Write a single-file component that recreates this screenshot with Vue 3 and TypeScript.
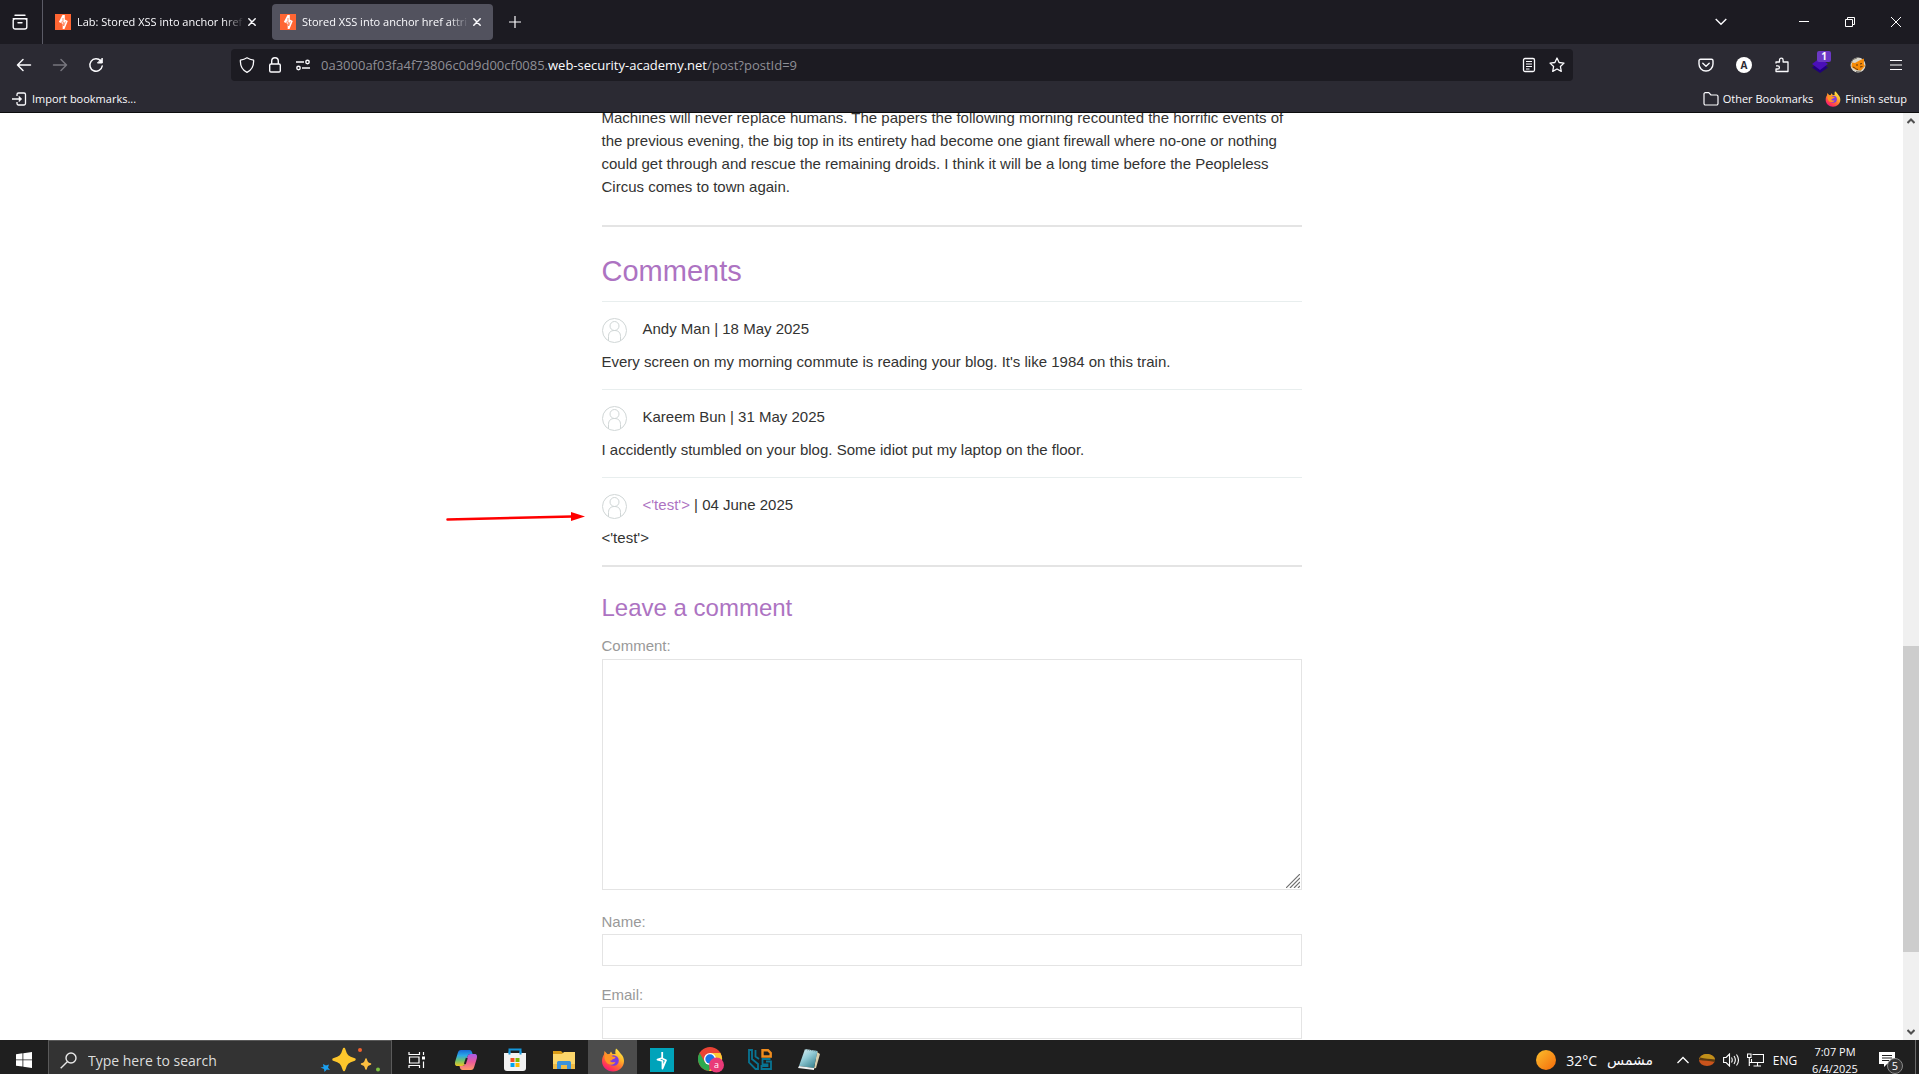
<script setup lang="ts">
import { ref } from 'vue'

interface Tab {
  id: number
  title: string
  active: boolean
}

interface Comment {
  id: number
  author: string
  date: string
  text: string
  link?: boolean
}

const tabs = ref<Tab[]>([
  { id: 1, title: 'Lab: Stored XSS into anchor href', active: false },
  { id: 2, title: 'Stored XSS into anchor href attri', active: true },
])

const comments = ref<Comment[]>([
  {
    id: 1,
    author: 'Andy Man',
    date: '18 May 2025',
    text: "Every screen on my morning commute is reading your blog. It's like 1984 on this train.",
  },
  {
    id: 2,
    author: 'Kareem Bun',
    date: '31 May 2025',
    text: 'I accidently stumbled on your blog. Some idiot put my laptop on the floor.',
  },
  { id: 3, author: "<'test'>", date: '04 June 2025', text: "<'test'>", link: true },
])

const comment = ref('')
const name = ref('')
const email = ref('')
const search = ref('')
</script>

<template>
  <div class="desktop">
    <header class="browser">
      <div class="tab-bar">
        <button class="icon-btn recent" aria-label="Recent browsing">
          <svg width="16" height="16" viewBox="0 0 16 16" fill="none" stroke="#fbfbfe" stroke-width="1.4">
            <path d="M3 1.2h10M1.2 4.7h13.6v8.3a2 2 0 0 1-2 2H3.200a2 2 0 0 1-2-2V6.200a2 2 0 0 1 2-1.500M14.800 6.200a2 2 0 0 0-2-1.500M6 8.700h4" stroke-linecap="round" />
          </svg>
        </button>
        <div class="tabs">
          <div v-for="tab in tabs" :key="tab.id" class="tab" :class="{ active: tab.active }">
            <svg class="favicon" width="16" height="16" viewBox="0 0 16 16">
              <rect width="16" height="16" fill="#ff6633" />
              <path d="M7.500 1h2.300v4.500l3 1.500-3.300 8H7.700v-5.200L3.800 8z" fill="#fff" />
              <path d="M8 4v3.800L6 8.300M8.600 8v4l1.900-4.500" stroke="#ff6633" stroke-width=".700" fill="none" />
            </svg>
            <span class="tab-title">{{ tab.title }}</span>
            <button class="tab-close" aria-label="Close tab">
              <svg width="8" height="8" viewBox="0 0 8 8" stroke="#fbfbfe" stroke-width="1.500" stroke-linecap="round">
                <path d="M.800.800 7.200 7.200M7.200.800.800 7.200" />
              </svg>
            </button>
          </div>
        </div>
        <button class="icon-btn new-tab" aria-label="New tab">
          <svg width="12" height="12" viewBox="0 0 12 12" stroke="#fbfbfe" stroke-width="1.200"><path d="M6 0v12M0 6h12" /></svg>
        </button>
        <div class="window-controls">
          <button class="icon-btn list-tabs" aria-label="List all tabs">
            <svg width="12" height="8" viewBox="0 0 12 8" fill="none" stroke="#fbfbfe" stroke-width="1.400"><path d="m.700 1 5.300 5.300L11.300 1" /></svg>
          </button>
          <button class="icon-btn win" aria-label="Minimize">
            <svg width="10" height="10" viewBox="0 0 10 10" stroke="#fff"><path d="M0 4.500h10" /></svg>
          </button>
          <button class="icon-btn win" aria-label="Restore">
            <svg width="10" height="10" viewBox="0 0 10 10" fill="none" stroke="#fff"><path d="M.500 2.500h7v7h-7zM2.500 2.500v-2h7v7h-2" /></svg>
          </button>
          <button class="icon-btn win" aria-label="Close">
            <svg width="10" height="10" viewBox="0 0 10 10" stroke="#fff"><path d="m0 0 10 10M10 0 0 10" /></svg>
          </button>
        </div>
      </div>

      <div class="nav-bar">
        <div class="nav-left">
          <button class="icon-btn nav" aria-label="Back">
            <svg width="16" height="16" viewBox="0 0 16 16" fill="none" stroke="#fbfbfe" stroke-width="1.500" stroke-linecap="round" stroke-linejoin="round"><path d="M14.500 8h-13M7 2.500 1.500 8 7 13.500" /></svg>
          </button>
          <button class="icon-btn nav" aria-label="Forward" disabled>
            <svg width="16" height="16" viewBox="0 0 16 16" fill="none" stroke="#77767e" stroke-width="1.500" stroke-linecap="round" stroke-linejoin="round"><path d="M1.500 8h13M9 2.500 14.500 8 9 13.500" /></svg>
          </button>
          <button class="icon-btn nav" aria-label="Reload">
            <svg width="16" height="16" viewBox="0 0 16 16" fill="none" stroke="#fbfbfe" stroke-width="1.500" stroke-linecap="round"><path d="M12.800 4A6.200 6.200 0 1 0 14.200 9" /><path d="M14.300 1.500V6H9.800z" fill="#fbfbfe" stroke-width="1" stroke-linejoin="round" /></svg>
          </button>
        </div>
        <div class="url-bar">
          <button class="icon-btn url-icon" aria-label="Tracking protection">
            <svg width="16" height="16" viewBox="0 0 16 16" fill="none" stroke="#fbfbfe" stroke-width="1.300" stroke-linejoin="round"><path d="M8 .800c2 1.300 4.200 2 6.600 2.400C14.900 8.800 12.800 13 8 15.300 3.200 13 1.100 8.800 1.400 3.200 3.800 2.800 6 2.100 8 .800z" /></svg>
          </button>
          <button class="icon-btn url-icon" aria-label="Site information">
            <svg width="16" height="16" viewBox="0 0 16 16" fill="none" stroke="#fbfbfe" stroke-width="1.400"><rect x="2.700" y="7" width="10.600" height="8" rx="1.300" /><path d="M4.700 7V4a3.300 3.300 0 0 1 6.600 0v3" /></svg>
          </button>
          <button class="icon-btn url-icon" aria-label="Permissions">
            <svg width="16" height="16" viewBox="0 0 16 16" fill="none" stroke="#fbfbfe" stroke-width="1.400"><path d="M1 5h8M7 11h8" /><circle cx="12.500" cy="5" r="1.700" /><circle cx="3.500" cy="11" r="1.700" /></svg>
          </button>
          <a class="url" href="#post">0a3000af03fa4f73806c0d9d00cf0085.<b>web-security-academy.net</b>/post?postId=9</a>
          <button class="icon-btn url-icon" aria-label="Reader view">
            <svg width="16" height="16" viewBox="0 0 16 16" fill="none" stroke="#fbfbfe" stroke-width="1.300"><rect x="2.500" y="1.500" width="11" height="13" rx="1.500" /><path d="M5 4.500h6M5 7h6M5 9.500h6M5 12h3.500" stroke-width="1" /></svg>
          </button>
          <button class="icon-btn url-icon" aria-label="Bookmark this page">
            <svg width="16" height="16" viewBox="0 0 16 16" fill="none" stroke="#fbfbfe" stroke-width="1.300" stroke-linejoin="round"><path d="m8 1 2.100 4.500 4.900.600-3.600 3.400.900 4.900L8 12l-4.300 2.400.900-4.900L1 6.100l4.900-.600z" /></svg>
          </button>
        </div>
        <div class="nav-right">
          <button class="icon-btn ext" aria-label="Save to Pocket">
            <svg width="16" height="16" viewBox="0 0 16 16" fill="none" stroke="#fbfbfe" stroke-width="1.400" stroke-linecap="round" stroke-linejoin="round"><path d="M2.500 2.200h11a1.500 1.500 0 0 1 1.500 1.500V7A7 7 0 0 1 1 7V3.700a1.500 1.500 0 0 1 1.500-1.500z" /><path d="M4.800 6.300 8 9.300l3.200-3" /></svg>
          </button>
          <button class="icon-btn ext" aria-label="Account">
            <span class="account">A</span>
          </button>
          <button class="icon-btn ext" aria-label="Extensions">
            <svg width="16" height="16" viewBox="0 0 16 16" fill="none" stroke="#fbfbfe" stroke-width="1.300" stroke-linejoin="round"><path d="M2 6.500V5h3.500V3a1.800 1.800 0 1 1 3.600 0v2H14v9.500H2V12h1.800a1.600 1.600 0 0 0 0-3.200H2" /></svg>
          </button>
          <button class="icon-btn ext stack" aria-label="Container extension">
            <svg width="18" height="18" viewBox="0 0 18 18"><path d="m9 6 8 5.500L9 17l-8-5.500z" fill="#20007a" /><path d="m9 2 8 6-8 6-8-6z" fill="#4a0fb8" /></svg>
            <span class="badge">1</span>
          </button>
          <button class="icon-btn ext" aria-label="FoxyProxy">
            <svg width="16" height="16" viewBox="0 0 16 16"><circle cx="8" cy="8" r="7.500" fill="#d8d5cb" /><path d="M2 5.500 5 6 9.500 3.500 14 1.500 13.800 7 15 9l-4 4.500-5-.500-4.500-3z" fill="#f58a07" /><path d="M3 10c2 .500 3 2.500 5 2.500M6 8h2M10 7l2-.500M10 10l2.500-.500" stroke="#5d3510" fill="none" /><path d="M1 6 3 2.500l4-1.500M6 14.500l5-.500" stroke="#77736b" fill="none" /></svg>
          </button>
          <button class="icon-btn ext" aria-label="Application menu">
            <svg width="12" height="12" viewBox="0 0 12 12" stroke="#fbfbfe" stroke-width="1.200" stroke-linecap="round"><path d="M.500 1.500h11M.500 6h11M.500 10.500h11" /></svg>
          </button>
        </div>
      </div>

      <div class="bookmarks-bar">
        <button class="bookmark">
          <svg width="16" height="16" viewBox="0 0 16 16" fill="none" stroke="#fbfbfe" stroke-width="1.300"><path d="M5 5V3.500A1.500 1.500 0 0 1 6.500 2H12a1.500 1.500 0 0 1 1.500 1.500v9A1.500 1.500 0 0 1 12 14H6.500A1.500 1.500 0 0 1 5 12.500V11M0 8h8" /><path d="M7 5.200 9.800 8 7 10.800z" fill="#fbfbfe" stroke-width=".500" /></svg>
          Import bookmarks...
        </button>
        <div class="bookmarks-right">
          <button class="bookmark">
            <svg width="16" height="16" viewBox="0 0 16 16" fill="none" stroke="#fbfbfe" stroke-width="1.200" stroke-linejoin="round"><path d="M1 4V3a1.300 1.300 0 0 1 1.300-1.300h3.500L8 4h5.500A1.500 1.500 0 0 1 15 5.500v7a1.500 1.500 0 0 1-1.500 1.500h-11A1.500 1.500 0 0 1 1 12.500z" /></svg>
            Other Bookmarks
          </button>
          <button class="bookmark">
            <svg width="16" height="16" viewBox="0 0 24 24"><use href="#firefox-mark" /></svg>
            Finish setup
          </button>
        </div>
      </div>
    </header>

    <div class="viewport">
      <main class="page">
        <div id="post" class="column">
          <p class="article">
            Machines will never replace humans. The papers the following morning recounted the horrific events of
            the previous evening, the big top in its entirety had become one giant firewall where no-one or nothing
            could get through and rescue the remaining droids. I think it will be a long time before the Peopleless
            Circus comes to town again.
          </p>
          <hr class="rule" />
          <h1>Comments</h1>
          <section v-for="item in comments" :key="item.id" class="comment">
            <div class="comment-head">
              <svg class="avatar" width="25" height="25" viewBox="0 0 25 25" fill="none" stroke="#d0d6d6">
                <circle cx="12.500" cy="12.500" r="12" />
                <circle cx="12.500" cy="8" r="4.500" />
                <path d="M6.500 23v-4.500c0-3.800 2-6 6-6s6 2.200 6 6V23" />
              </svg>
              <span><a v-if="item.link" href="#author">{{ item.author }}</a><template v-else>{{ item.author }}</template> | {{ item.date }}</span>
            </div>
            <p>{{ item.text }}</p>
            <svg v-if="item.link" class="pointer" width="140" height="12" viewBox="0 0 140 12">
              <path d="M1.500 8.500 126 5.500" stroke="#ff0000" stroke-width="2.500" stroke-linecap="round" />
              <path d="M125 1v9l14-4.500z" fill="#ff0000" />
            </svg>
          </section>
          <hr class="rule" />
          <form @submit.prevent>
            <h2>Leave a comment</h2>
            <label for="comment">Comment:</label>
            <div class="textarea-wrap">
              <textarea id="comment" v-model="comment"></textarea>
              <svg class="grip" width="14" height="14" viewBox="0 0 14 14" stroke="#707070" stroke-width="1.200"><path d="M0 14 14 0M4 14 14 4M8 14l6-6M12 14l2-2" /></svg>
            </div>
            <label for="name">Name:</label>
            <input id="name" v-model="name" type="text" />
            <label for="email">Email:</label>
            <input id="email" v-model="email" type="email" />
          </form>
        </div>
      </main>
      <div class="scrollbar">
        <button aria-label="Scroll up"><svg width="8" height="6" viewBox="0 0 8 6" fill="none" stroke="#505050" stroke-width="2"><path d="M.500 5 4 1.500 7.500 5" /></svg></button>
        <div class="track"><div class="before"></div><div class="thumb"></div><div class="after"></div></div>
        <button aria-label="Scroll down"><svg width="8" height="6" viewBox="0 0 8 6" fill="none" stroke="#505050" stroke-width="2"><path d="M.500 1 4 4.500 7.500 1" /></svg></button>
      </div>
    </div>

    <footer class="taskbar">
      <div class="taskbar-inner">
        <button class="icon-btn start" aria-label="Start">
          <svg width="16" height="16" viewBox="0 0 16 16" fill="#fff"><path d="M0 2.200 6.500 1.300v6.200H0zM7.300 1.200 16 0v7.500H7.300zM0 8.300h6.500v6.300L0 13.700zM7.300 8.300H16V16l-8.700-1.200z" /></svg>
        </button>
        <label class="search">
          <svg width="17" height="17" viewBox="0 0 17 17" fill="none" stroke="#e8e8e8" stroke-width="1.400"><circle cx="11" cy="6" r="5" /><path d="M7.300 9.700.700 16.300" /></svg>
          <input v-model="search" type="text" placeholder="Type here to search" aria-label="Type here to search" />
          <svg width="62" height="26" viewBox="0 0 62 26">
            <path d="M24 2c2 7 3.500 8.500 10.500 10.500C27.500 14.500 26 16 24 23c-2-7-3.500-8.500-10.500-10.500C20.500 10.500 22 9 24 2z" fill="#fdc62c" stroke="#fdc62c" stroke-width="2.500" stroke-linejoin="round" />
            <path d="M46 12c1 3.500 1.500 4 4.500 5C47.500 18 47 18.500 46 22c-1-3.500-1.500-4-4.500-5C44.500 16 45 15.500 46 12z" fill="#fdc040" stroke="#fdc040" stroke-width="1.500" stroke-linejoin="round" />
            <path d="m3 17 3 1.500 3-1-1 3 2 2.500-3.200-.500L4.500 25 4 22l-3.500-1.500L3.500 20z" fill="#1ba0f0" />
            <circle cx="40" cy="3" r="2" fill="#f2622e" /><circle cx="58" cy="22.500" r="2" fill="#7dc242" />
          </svg>
        </label>
        <nav class="apps">
          <button class="icon-btn app" aria-label="Task view">
            <svg width="18" height="16" viewBox="0 0 18 16" fill="none" stroke="#fff" stroke-width="1.200"><path d="M1 0v2.500h10.500V0M1 16v-2.500h10.500V16M1.500 5h9.500v6H1.500zM15.500 0v3M15.500 9.500V16" /><path d="M14 4.500h3v3h-3z" fill="#fff" stroke="none" /></svg>
          </button>
          <button class="icon-btn app" aria-label="Copilot">
            <svg width="24" height="24" viewBox="0 0 24 24">
              <defs>
                <linearGradient id="cp-a" x1="0" y1="0" x2="0" y2="1"><stop offset="0" stop-color="#1868d8" /><stop offset=".350" stop-color="#2ba9e8" /><stop offset=".650" stop-color="#6cc071" /><stop offset="1" stop-color="#f0c820" /></linearGradient>
                <linearGradient id="cp-b" x1="0" y1="0" x2="0" y2="1"><stop offset="0" stop-color="#a45bea" /><stop offset=".500" stop-color="#ea5a9a" /><stop offset="1" stop-color="#ff9a68" /></linearGradient>
              </defs>
              <path d="M7 2h8.500c1.500 0 2.200 1 2.600 2.500L18.600 6h-2c-2 0-2.600 1-3.100 2.500l-2.300 7c-.600 1.700-1.200 2.500-3 2.500H3.500C1 18 .600 16 1.200 13.500l2.600-8.600C4.400 3 5.200 2 7 2z" fill="url(#cp-a)" />
              <path d="M17 22H8.500c-1.500 0-2.200-1-2.600-2.500L5.500 18h2.700c1.800 0 2.400-.800 3-2.500l2.300-7C14 7 14.600 6 16.600 6h3.900c2.500 0 2.900 2 2.300 4.500l-2.600 8.600C19.600 21 18.800 22 17 22z" fill="url(#cp-b)" />
              <path d="m12.800 10-2 6" stroke="#1f1f1f" stroke-width="2" />
            </svg>
          </button>
          <button class="icon-btn app" aria-label="Microsoft Store">
            <svg width="24" height="24" viewBox="0 0 24 24"><path d="M6.500 6V1.500h11V6" fill="none" stroke="#1597dc" stroke-width="2" /><path d="M1 5h22v15a3 3 0 0 1-3 3H4a3 3 0 0 1-3-3z" fill="#f2f2f2" /><path d="M6.500 6.500v-3M17.500 6.500v-3" stroke="#1597dc" stroke-width="2" /><path d="M7.500 10h4v4h-4z" fill="#f25022" /><path d="M12.500 10h4v4h-4z" fill="#7fba00" /><path d="M7.500 15h4v4h-4z" fill="#00a4ef" /><path d="M12.500 15h4v4h-4z" fill="#ffb900" /></svg>
          </button>
          <button class="icon-btn app" aria-label="File Explorer">
            <svg width="24" height="24" viewBox="0 0 24 24"><path d="M1 3h8l2 2v3H1z" fill="#d99b16" /><path d="M1 6h9l2-2h11v17H1z" fill="#fbd66b" /><path d="M1 16h22v5H1z" fill="#efbb45" /><path d="M5 21v-6.500A1.500 1.500 0 0 1 6.500 13h11a1.500 1.500 0 0 1 1.500 1.500V21h-4v-4H9v4z" fill="#3b92dc" /></svg>
          </button>
          <button class="icon-btn app current" aria-label="Firefox">
            <svg width="24" height="24" viewBox="0 0 24 24">
              <defs>
                <linearGradient id="ff-body" x1=".850" y1="0" x2=".200" y2="1"><stop offset="0" stop-color="#fff44f" /><stop offset=".350" stop-color="#ffb429" /><stop offset=".600" stop-color="#ff6a33" /><stop offset=".850" stop-color="#ff2c5f" /><stop offset="1" stop-color="#e31587" /></linearGradient>
              </defs>
              <g id="firefox-mark">
                <path d="M15 .500c3 2 3.500 4 5 5.500 2 2 3 4.500 3 7C23 19 18 23.500 12 23.500S1 19 1 13c0-3 1-5 2-6.500L3.500 3l3 3.200 2-.200L10 3.500l1.500 2.500h3c-.500-2 0-4 .500-5.500z" fill="url(#ff-body)" />
                <circle cx="12.500" cy="12.500" r="5.300" fill="#7b3ce0" />
                <path d="M4 7c3-1.500 6-.500 7.500 1.500l3 .500c0 1.500-1.500 2-3 2.200-.500 1.300-1.500 1.300-2.500 1.500 1 1.800 3 2 5.500 1-1 3.500-6.500 4-9 .800C3.500 12 3 9.500 4 7z" fill="#ff9425" />
              </g>
            </svg>
          </button>
          <button class="icon-btn app" aria-label="Burp Suite">
            <svg width="24" height="24" viewBox="0 0 24 24"><path d="M0 0h24v24H0z" fill="#00a3ba" /><path d="M12.200 4v6l-4.700 1.700 5 1.300v7.500L16 12.200l-3.800-1.700" fill="none" stroke="#fff" stroke-width="1.800" stroke-linejoin="round" /></svg>
          </button>
          <button class="icon-btn app" aria-label="Google Chrome">
            <svg class="chrome" width="26" height="26" viewBox="0 0 26 26"><circle cx="12" cy="12" r="12" fill="#ea4335" /><path d="M1.600 6 7 15.500 12 18l-1 6A12 12 0 0 1 1.600 6z" fill="#2da94f" /><path d="M12 6h10.400A12 12 0 0 1 11 24l6-9z" fill="#fcc934" /><circle cx="12" cy="12" r="6" fill="#fff" /><circle cx="12" cy="12" r="4.700" fill="#1a73e8" /><circle cx="18.500" cy="18" r="7.500" fill="#e93a78" /><text x="18.500" y="21" text-anchor="middle" font-size="9" fill="#fff" font-family="Open Sans, sans-serif">a</text></svg>
          </button>
          <button class="icon-btn app" aria-label="Virtual machine manager">
            <svg width="24" height="24" viewBox="0 0 24 24" fill="none" stroke="#087493" stroke-width="1.800"><path d="M1 2h3v9l6 5v5H7.500L1 14.500zM7.500 2v6.500L11 11M22.500 11h-8v5.500h5v1.500h-6V21h9.500v-7.500h-5" /><path d="M14.500 2.200H20L22.700 5v3.500h-8.200z" stroke="#f08c1e" stroke-width="2.400" /></svg>
          </button>
          <button class="icon-btn app" aria-label="Notepad">
            <svg width="24" height="24" viewBox="0 0 24 24"><defs><linearGradient id="np" x1="0" y1="0" x2=".700" y2="1"><stop offset="0" stop-color="#e4f4f7" /><stop offset=".500" stop-color="#92cad5" /><stop offset="1" stop-color="#3e8794" /></linearGradient></defs><path d="m20 4 3 2-4 14-2 .500z" fill="#d8cfae" /><path d="m8 1 12.500 2L17 20 2 18z" fill="url(#np)" /><path d="m2 18 15 2v2L1 20z" fill="#eef1f1" /><path d="m8 1.500 12.500 2" stroke="#6f8d94" stroke-dasharray="1 1" /></svg>
          </button>
        </nav>
        <div class="tray">
          <button class="weather">
            <svg width="20" height="20" viewBox="0 0 20 20"><defs><linearGradient id="sun" x1="0" y1="0" x2="1" y2="1"><stop offset="0" stop-color="#fbbf2d" /><stop offset="1" stop-color="#f56a0a" /></linearGradient></defs><circle cx="10" cy="10" r="10" fill="url(#sun)" /></svg>
            <span>32°C</span><span class="arabic" lang="ar">مشمس</span>
          </button>
          <button class="icon-btn tray-icon" aria-label="Show hidden icons">
            <svg width="12" height="8" viewBox="0 0 12 8" fill="none" stroke="#fff" stroke-width="1.300"><path d="M.500 7 6 1.500 11.500 7" /></svg>
          </button>
          <button class="icon-btn tray-icon" aria-label="Background app">
            <svg width="16" height="12" viewBox="0 0 16 12"><ellipse cx="8" cy="6" rx="8" ry="6" fill="#c9541c" /><path d="M0 5C1 2 4 0 8 0s8 2.500 8 6c-6 0-11 0-16-1z" fill="#c0901a" /><path d="M1 3.500c5 1.500 9 1 15 2V8C10 7 5 6.500 0 6z" fill="#5b3a10" /></svg>
          </button>
          <button class="icon-btn tray-icon" aria-label="Volume">
            <svg width="17" height="14" viewBox="0 0 17 14" fill="none" stroke="#fff" stroke-width="1.100"><path d="M.600 4.500h2.500L6.500 1v12L3.100 9.500H.600zM8.500 4.500q1.500 2.500 0 5M11 3q2.700 4 0 8M13.500 1.500q4 5.500 0 11" /></svg>
          </button>
          <button class="icon-btn tray-icon" aria-label="Network">
            <svg width="17" height="14" viewBox="0 0 17 14" fill="none" stroke="#fff" stroke-width="1.100"><path d="M5.500 1.500h11v8h-12V6M10.500 9.500v3M6.500 13h7.500M.500 1v3.500H4V1zM2.300 4.500V13M4.500 9.500H2.300" /></svg>
          </button>
          <button class="lang">ENG</button>
          <button class="clock"><span>7:07 PM</span><span>6/4/2025</span></button>
          <button class="icon-btn notify" aria-label="Notifications">
            <svg width="16" height="16" viewBox="0 0 16 16"><path d="M0 0h16v12H8l-3 3v-3H0z" fill="#fff" /><path d="M3 3.500h10M3 6h10M3 8.500h7" stroke="#1f1f1f" /></svg>
            <span class="count">5</span>
          </button>
          <div class="peek"></div>
        </div>
      </div>
    </footer>
  </div>
</template>

<style>
body {
  margin: 0;
  background: #fff;
}
</style>

<style scoped>
.desktop {
  height: 100vh;
  display: flex;
  flex-direction: column;
  overflow: hidden;
  font-family: 'Open Sans', 'Noto Sans', sans-serif;
  font-size: 11px;
  color: #fbfbfe;
}
button {
  border: 0;
  padding: 0;
  margin: 0;
  background: none;
  color: inherit;
  font: inherit;
}
svg {
  display: block;
  flex: none;
}
.icon-btn {
  display: flex;
  align-items: center;
  justify-content: center;
  flex: none;
}

/* Browser chrome */
.browser {
  flex: none;
  background: #2b2a33;
  border-bottom: 1px solid #0c0c0d;
}
.tab-bar {
  display: flex;
  align-items: center;
  height: 44px;
  background: #1c1b22;
}
.recent {
  width: 43px;
  height: 44px;
  padding-right: 2px;
  box-sizing: border-box;
  border-right: 1px solid #5b5b66;
}
.tabs {
  display: flex;
  gap: 4px;
  padding-left: 4px;
}
.tab {
  display: flex;
  align-items: center;
  gap: 6px;
  width: 221px;
  height: 36px;
  padding: 0 8px;
  box-sizing: border-box;
  border-radius: 4px;
}
.tab.active {
  background: #52525e;
}
.tab-title {
  flex: 1;
  overflow: hidden;
  white-space: nowrap;
  line-height: 20px;
  mask-image: linear-gradient(to left, transparent, #000 20px);
}
.tab-close {
  width: 16px;
  display: flex;
  justify-content: center;
  margin-left: -6px;
}
.new-tab {
  width: 44px;
  height: 36px;
}
.window-controls {
  display: flex;
  align-items: center;
  margin-left: auto;
}
.list-tabs {
  width: 36px;
  height: 44px;
  margin-right: 42px;
}
.win {
  width: 46px;
  height: 44px;
}
.nav-bar {
  display: flex;
  align-items: center;
  height: 41px;
}
.nav-left {
  display: flex;
  width: 225px;
  padding-left: 6px;
}
.nav {
  width: 36px;
  height: 32px;
}
.url-bar {
  flex: 1;
  display: flex;
  align-items: center;
  height: 32px;
  padding: 0 2px;
  border-radius: 4px;
  background: #1c1b22;
}
.url-icon {
  width: 28px;
  height: 32px;
}
.url {
  flex: 1;
  padding-left: 4px;
  color: #8f8f96;
  text-decoration: none;
  font-size: 13px;
}
.url b {
  font-weight: 400;
  color: #fbfbfe;
}
.nav-right {
  display: flex;
  justify-content: flex-end;
  width: 342px;
  padding-right: 4px;
}
.ext {
  width: 38px;
  height: 32px;
  position: relative;
}
.account {
  width: 16px;
  height: 16px;
  border-radius: 8px;
  background: #fff;
  color: #2b2a33;
  font-size: 10px;
  font-weight: 700;
  line-height: 16px;
  text-align: center;
}
.badge {
  position: absolute;
  top: 2px;
  right: 8px;
  width: 14px;
  height: 11px;
  border-radius: 2px;
  background: #6b38c4;
  font-size: 10px;
  font-weight: 700;
  line-height: 11px;
}
.bookmarks-bar {
  display: flex;
  justify-content: space-between;
  align-items: center;
  height: 27px;
  padding: 0 12px;
}
.bookmarks-right {
  display: flex;
  gap: 12px;
}
.bookmark {
  display: flex;
  align-items: center;
  gap: 4px;
  line-height: 20px;
}

/* Web page */
.viewport {
  flex: 1;
  min-height: 0;
  display: flex;
  background: #fff;
}
.page {
  flex: 1;
  overflow: hidden;
  font-family: 'Liberation Sans', Arial, sans-serif;
  font-size: 15px;
  line-height: 23px;
  color: #333332;
}
.column {
  max-width: 700px;
  margin: -7px auto 0;
}
.page p {
  margin: 0;
}
.page a {
  color: #ad73c2;
  text-decoration: none;
}
.rule {
  height: 2px;
  margin: 0;
  border: 0;
  background: #e4e4e4;
}
.article + .rule {
  margin-top: 27px;
}
h1,
h2 {
  margin: 0;
  font-weight: 400;
  color: #ad73c2;
}
h1 {
  padding: 28px 0 13px;
  font-size: 29px;
  line-height: 33px;
}
.comment {
  position: relative;
  border-top: 1px solid #e8eeee;
  padding: 14px 0 16px;
}
.comment-head {
  display: flex;
  gap: 16px;
  margin-bottom: 6px;
}
.comment-head span {
  height: 28px;
  line-height: 26px;
}
.comment .avatar {
  margin-top: 2px;
}
.pointer {
  position: absolute;
  left: -156px;
  top: 33px;
}
form {
  padding-top: 26px;
}
h2 {
  font-size: 24px;
  line-height: 30px;
}
label {
  display: block;
  color: #999;
}
h2 + label {
  padding-top: 11px;
}
textarea,
form input {
  display: block;
  width: 100%;
  box-sizing: border-box;
  border: 1px solid #e4e4e4;
  border-radius: 0;
  background: #fff;
  font: inherit;
  color: inherit;
  outline: 0;
}
.textarea-wrap {
  position: relative;
  padding: 2px 0 20px;
}
textarea {
  height: 231px;
  resize: none;
}
.grip {
  position: absolute;
  right: 2px;
  bottom: 22px;
}
form input {
  height: 32px;
  margin: 1px 0 17px;
}
.scrollbar {
  width: 16px;
  display: flex;
  flex-direction: column;
  background: #f0f0f0;
}
.scrollbar button {
  height: 16px;
  display: flex;
  align-items: center;
  justify-content: center;
}
.track {
  flex: 1;
  display: flex;
  flex-direction: column;
}
.before {
  flex: 517;
}
.thumb {
  flex: 306;
  background: #cdcdcd;
}
.after {
  flex: 72;
}

/* Taskbar */
.taskbar {
  flex: none;
  height: 34px;
  overflow: hidden;
  background: #1f1f1f;
}
.taskbar-inner {
  display: flex;
  height: 40px;
}
.start {
  width: 48px;
}
.search {
  width: 344px;
  box-sizing: border-box;
  display: flex;
  align-items: center;
  gap: 11px;
  padding: 0 9px 0 11px;
  border: 1px solid #5a5a5a;
  background: #333;
}
.search input {
  flex: 1;
  min-width: 0;
  border: 0;
  padding: 0;
  outline: 0;
  background: none;
  color: #ddd;
  font: inherit;
  font-size: 14px;
}
.search input::placeholder {
  color: #ddd;
  opacity: 1;
}
.apps {
  display: flex;
}
.app {
  width: 49px;
}
.app.current {
  background: #4c4c4c;
}
.tray {
  display: flex;
  align-items: stretch;
  margin-left: auto;
}
.weather {
  display: flex;
  align-items: center;
  gap: 10px;
  padding-right: 18px;
  font-size: 14px;
}
.arabic {
  font-family: 'DejaVu Sans', sans-serif;
  font-size: 14px;
}
.tray-icon {
  width: 24px;
}
.lang {
  width: 36px;
  margin-right: 8px;
  font-size: 12px;
}
.clock {
  display: flex;
  flex-direction: column;
  align-items: center;
  justify-content: center;
  width: 48px;
  line-height: 17px;
}
.notify {
  position: relative;
  width: 56px;
}
.count {
  position: absolute;
  left: 28px;
  top: 18px;
  width: 14px;
  height: 14px;
  border: 1px solid #8a8a8a;
  border-radius: 8px;
  background: #333;
  font-size: 11px;
  line-height: 14px;
}
.peek {
  width: 3px;
  border-left: 1px solid #6a6a6a;
}
</style>
